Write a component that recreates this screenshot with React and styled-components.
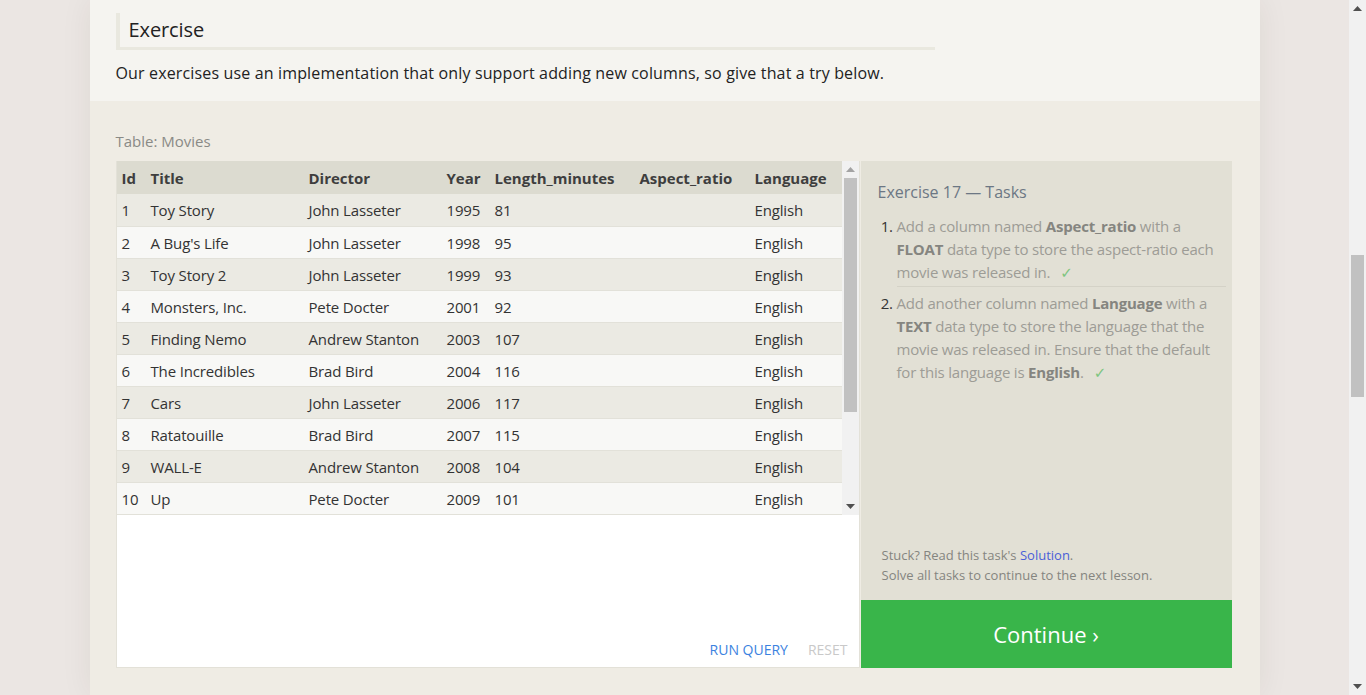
import React from "react"
import styled, { createGlobalStyle } from "styled-components"

const GlobalStyle = createGlobalStyle`
  html, body {
    margin: 0;
    height: 100%;
    overflow: hidden;
    background: #ebe6e3;
    font-family: "Open Sans", "DejaVu Sans", sans-serif;
  }
`

const movies = [
  [1, "Toy Story", "John Lasseter", 1995, 81],
  [2, "A Bug's Life", "John Lasseter", 1998, 95],
  [3, "Toy Story 2", "John Lasseter", 1999, 93],
  [4, "Monsters, Inc.", "Pete Docter", 2001, 92],
  [5, "Finding Nemo", "Andrew Stanton", 2003, 107],
  [6, "The Incredibles", "Brad Bird", 2004, 116],
  [7, "Cars", "John Lasseter", 2006, 117],
  [8, "Ratatouille", "Brad Bird", 2007, 115],
  [9, "WALL-E", "Andrew Stanton", 2008, 104],
  [10, "Up", "Pete Docter", 2009, 101],
]

const columns = [
  ["Id", 29],
  ["Title", 158],
  ["Director", 138],
  ["Year", 48],
  ["Length_minutes", 145],
  ["Aspect_ratio", 115],
  ["Language", 94],
]

const Page = styled.div`
  display: flex;
  height: 100vh;
`

const Viewport = styled.div`
  flex: 1;
  overflow: hidden;
`

const Column = styled.div`
  width: 1170px;
  margin: 0 auto;
  min-height: 100vh;
  background: #efece4;
  box-shadow: 0 0 30px rgba(60, 40, 30, 0.07);
`

const Intro = styled.section`
  height: 101px;
  box-sizing: border-box;
  padding: 13px 26px 0;
  background: #f5f4f0;
`

const Heading = styled.h2`
  width: 806px;
  margin: 0;
  padding: 3px 0 3px 9px;
  border-left: 4px solid #e9e8df;
  border-bottom: 3px solid #e9e8df;
  font-size: 20px;
  line-height: 28px;
  font-weight: 400;
  letter-spacing: -0.1px;
  color: #222;
`

const Lead = styled.p`
  margin: 11px 0 0;
  font-size: 16px;
  line-height: 24px;
  letter-spacing: 0.15px;
  color: #222;
`

const Workspace = styled.section`
  padding: 30px 28px 27px 26px;
  border-radius: 3px 3px 0 0;
`

const Caption = styled.div`
  font-size: 15px;
  line-height: 20px;
  color: #8a8a86;
  margin-bottom: 10px;
`

const Widget = styled.div`
  display: flex;
  gap: 1px;
  height: 507px;
`

const Editor = styled.div`
  width: 744px;
  box-sizing: border-box;
  display: flex;
  flex-direction: column;
  background: #fff;
  border: 1px solid #e3e1d8;
  border-top: 0;
`

const TableFrame = styled.div`
  display: flex;
  height: 354px;
`

const TableClip = styled.div`
  flex: 1;
  overflow: hidden;
`

const Table = styled.table`
  width: 100%;
  border-collapse: collapse;
  table-layout: fixed;
  font-size: 15px;
  letter-spacing: -0.15px;
  color: #333;
`

const Head = styled.th`
  height: 33px;
  padding: 0 0 0 5px;
  text-align: left;
  font-weight: 700;
  letter-spacing: 0;
  color: #3e3e3e;
  background: #dcdbd0;
  white-space: nowrap;
`

const Row = styled.tr`
  background: ${p => (p.$odd ? "#ebeae3" : "#f8f8f6")};
  border-bottom: 1px solid #e2e1d9;
`

const Cell = styled.td`
  height: ${p => (p.$tall ? 32 : 31)}px;
  padding: 0 0 0 5px;
  white-space: nowrap;
`

const ScrollTrack = styled.div`
  width: ${p => p.$w}px;
  display: flex;
  flex-direction: column;
  background: #f1f1f1;
`

const Arrow = styled.div`
  height: 17px;
  display: flex;
  align-items: center;
  justify-content: center;
`

const ThumbArea = styled.div`
  flex: 1;
  padding: 0 2px;
`

const Thumb = styled.div`
  background: #c1c1c1;
`

const EditorFooter = styled.div`
  flex: 1;
  display: flex;
  align-items: flex-end;
  justify-content: flex-end;
  gap: 20px;
  padding: 0 11px 7px 0;
`

const TextButton = styled.span`
  font-size: 14px;
  line-height: 20px;
  color: ${p => (p.$muted ? "#c9c9c9" : "#3b82e0")};
`

const Tasks = styled.div`
  flex: 1;
  display: flex;
  flex-direction: column;
`

const TasksBody = styled.div`
  flex: 1;
  display: flex;
  flex-direction: column;
  background: #e2e0d5;
  padding: 20px 6px 15px 17px;
`

const TasksTitle = styled.div`
  font-size: 16px;
  line-height: 22px;
  color: #6c7784;
`

const TaskList = styled.ol`
  margin: 12px 0 0;
  padding: 0 0 0 19px;
  font-size: 15px;
  line-height: 23px;
  letter-spacing: -0.2px;
  color: #9d9c96;
  li::marker {
    color: #333;
  }
  b {
    color: #858580;
  }
`

const Task = styled.li`
  padding: ${p => (p.$first ? "0 0 2px" : "5px 0 0")};
  border-bottom: ${p => (p.$first ? "1px solid #d4d2c7" : "0")};
`

const Check = styled.span`
  color: #7dc57f;
  margin-left: 10px;
`

const Hint = styled.div`
  margin-top: auto;
  padding-left: 4px;
  font-size: 13px;
  line-height: 20px;
  color: #858580;
  a {
    color: #4a5fd8;
    text-decoration: none;
  }
`

const Continue = styled.div`
  height: 68px;
  display: flex;
  align-items: center;
  justify-content: center;
  background: #39b54a;
  color: #fff;
  font-size: 22px;
`

const ArrowIcon = ({ up, color }) => (
  <svg width="9" height="5" viewBox="0 0 9 5">
    <polygon points={up ? "4.5,0 9,5 0,5" : "0,0 9,0 4.5,5"} fill={color} />
  </svg>
)

const Scrollbar = ({ width, offset, size, upColor, downColor }) => (
  <ScrollTrack $w={width}>
    <Arrow>
      <ArrowIcon up color={upColor} />
    </Arrow>
    <ThumbArea style={{ paddingTop: offset }}>
      <Thumb style={{ height: size }} />
    </ThumbArea>
    <Arrow>
      <ArrowIcon color={downColor} />
    </Arrow>
  </ScrollTrack>
)

const App = () => (
  <Page>
    <GlobalStyle />
    <Viewport>
      <Column>
        <Intro>
          <Heading>Exercise</Heading>
          <Lead>
            Our exercises use an implementation that only support adding new
            columns, so give that a try below.
          </Lead>
        </Intro>
        <Workspace>
          <Caption>Table: Movies</Caption>
          <Widget>
            <Editor>
              <TableFrame>
                <TableClip>
                  <Table>
                    <colgroup>
                      {columns.map(([name, w]) => (
                        <col key={name} style={{ width: w }} />
                      ))}
                    </colgroup>
                    <thead>
                      <tr>
                        {columns.map(([name]) => (
                          <Head key={name}>{name}</Head>
                        ))}
                      </tr>
                    </thead>
                    <tbody>
                      {movies.map(([id, title, director, year, len], i) => (
                        <Row key={id} $odd={i % 2 === 0}>
                          <Cell $tall={i === 0}>{id}</Cell>
                          <Cell>{title}</Cell>
                          <Cell>{director}</Cell>
                          <Cell>{year}</Cell>
                          <Cell>{len}</Cell>
                          <Cell></Cell>
                          <Cell>English</Cell>
                        </Row>
                      ))}
                    </tbody>
                  </Table>
                </TableClip>
                <Scrollbar
                  width={17}
                  offset={0}
                  size={234}
                  upColor="#a3a3a3"
                  downColor="#505050"
                />
              </TableFrame>
              <EditorFooter>
                <TextButton>RUN QUERY</TextButton>
                <TextButton $muted>RESET</TextButton>
              </EditorFooter>
            </Editor>
            <Tasks>
              <TasksBody>
                <TasksTitle>Exercise 17 — Tasks</TasksTitle>
                <TaskList>
                  <Task $first>
                    Add a column named <b>Aspect_ratio</b> with a <b>FLOAT</b>{" "}
                    data type to store the aspect-ratio each movie was released
                    in.<Check>✓</Check>
                  </Task>
                  <Task>
                    Add another column named <b>Language</b> with a <b>TEXT</b>{" "}
                    data type to store the language that the movie was released
                    in. Ensure that the default for this language is{" "}
                    <b>English</b>.<Check>✓</Check>
                  </Task>
                </TaskList>
                <Hint>
                  Stuck? Read this task's <a href="#">Solution</a>.
                  <br />
                  Solve all tasks to continue to the next lesson.
                </Hint>
              </TasksBody>
              <Continue>Continue ›</Continue>
            </Tasks>
          </Widget>
        </Workspace>
      </Column>
    </Viewport>
    <Scrollbar
      width={17}
      offset={238}
      size={142}
      upColor="#505050"
      downColor="#505050"
    />
  </Page>
)

export default App
